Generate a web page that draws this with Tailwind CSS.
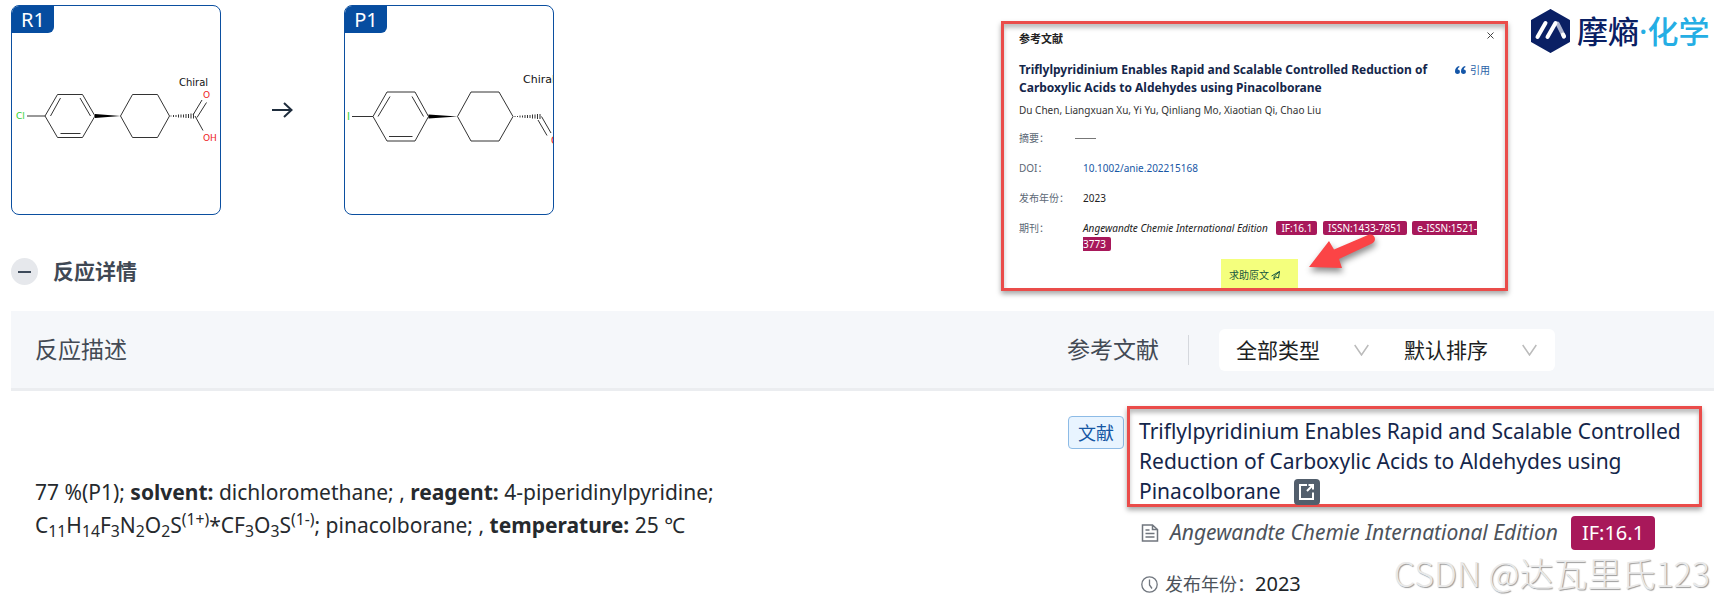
<!DOCTYPE html>
<html lang="zh">
<head>
<meta charset="utf-8">
<title>反应详情</title>
<script src="https://cdn.jsdelivr.net/npm/@tailwindcss/browser@4"></script>
</head>
<body class="relative bg-white overflow-x-hidden font-['Noto_Sans','Noto_Sans_CJK_SC',sans-serif] text-[#212529]">
<header class="flex items-start">
  <div class="grow pl-[11px] pt-[5px]">
    <div class="flex items-center">
      <figure class="relative size-[210px] shrink-0 overflow-hidden rounded-lg border border-[#0b4fa0]">
        <figcaption class="absolute left-0 top-0 flex h-[27px] w-[42px] items-center justify-center rounded-br-md bg-[#064da0] text-xl text-white">R1</figcaption>
        <svg class="size-full" viewBox="12 6 208 208" fill="none" stroke="#333" stroke-width="1" aria-label="R1">
          <path d="M27 116H45L57.500 94.500H82.500L95 116L82.500 137.500H57.500L45 116M50.500 116L60.500 98M80 98L90.500 116M60.500 133.500H80.500M120.500 116L132.500 94.500H157.500L169.500 116L157.500 137.500H132.500ZM193 115L202 100M197 117.500L206.500 102.500M195 116L203 130.500"/>
          <path d="M95 114V118L120.500 116Z" fill="#000" stroke="none"/>
          <path d="M171 115.500v1M173.500 115v2M176 115v2M178.500 114.500v3M181 114.500v3M183.500 114.500v3M186 114v4M188.500 114v4M191 113.500v5M193.500 113.500v5"/>
          <g stroke="none" class="font-['DejaVu_Sans']"><text x="16" y="119" font-size="9" fill="#2fd02f">Cl</text><text x="179" y="86" font-size="10" fill="#111">Chiral</text><text x="203" y="98" font-size="9" fill="#e22">O</text><text x="203" y="141" font-size="9" fill="#e22">OH</text></g>
        </svg>
      </figure>
      <svg class="mx-[51px] h-[16px] w-[21px]" viewBox="0 0 21 16" fill="none" stroke="#1f2d3d" stroke-width="2"><path d="M0 8H19M12 1L19.500 8L12 15"/></svg>
      <figure class="relative size-[210px] shrink-0 overflow-hidden rounded-lg border border-[#0b4fa0]">
        <figcaption class="absolute left-0 top-0 flex h-[27px] w-[42px] items-center justify-center rounded-br-md bg-[#064da0] text-xl text-white">P1</figcaption>
        <svg class="size-full" viewBox="345 6 208 208" fill="none" stroke="#333" stroke-width="1" aria-label="P1">
          <path d="M352 116.500H373L387 92H415L428.500 116.500L415 141H387L373 116.500M378 116.500L390 96.500M412 96.500L423.500 116.500M389 136.500H412.500M457.500 116.500L471 92H499L513 116.500L499 141H471ZM541.500 116.500L551 133M538 120L547 135.500"/>
          <path d="M428.500 114.500V118.500L457.500 116.500Z" fill="#000" stroke="none"/>
          <path d="M515 116v1M517.500 116v1M520 115.500v2M522.500 115.500v2M525 115v3M527.500 115v3M530 115v3M532.500 114.500v4M535 114.500v4M537.500 114v5M540 114v5"/>
          <g stroke="none" class="font-['DejaVu_Sans']"><text x="347" y="120" font-size="10" fill="#2fd02f">I</text><text x="523" y="83" font-size="11" fill="#111">Chiral</text><text x="551" y="144" font-size="10" fill="#e22">O</text></g>
        </svg>
      </figure>
    </div>
    <div class="mt-[43px] flex h-[27px] items-center gap-[15px]">
      <button type="button" aria-label="收起" class="flex size-[27px] items-center justify-center rounded-full bg-[#e6e8ec]"><span class="h-[2px] w-[13px] bg-[#3d4a5a]"></span></button>
      <h2 class="text-[21px] font-bold leading-none text-[#3f4854]">反应详情</h2>
    </div>
  </div>

  <section class="relative mt-[21px] h-[270px] w-[507px] shrink-0 border-3 border-[#ea4c4a] px-[15px] text-[10px] shadow-[0_3px_5px_rgba(0,0,0,0.35),inset_0_4px_4px_rgba(0,0,0,0.25)]">
    <div class="flex items-start justify-between pt-[7px]">
      <h3 class="text-[11px] font-bold leading-[16px] text-[#222]">参考文献</h3>
      <button type="button" aria-label="关闭" class="-mr-[5px] flex size-[8px] items-center"><svg class="size-[7px]" viewBox="0 0 7 7" stroke="#444" fill="none"><path d="M0.500 0.500L6.500 6.500M6.500 0.500L0.500 6.500"/></svg></button>
    </div>
    <div class="mt-[14px] flex items-start justify-between">
      <h4 class="w-[430px] text-[12px] font-bold leading-[18px] text-[#14264a]">Triflylpyridinium Enables Rapid and Scalable Controlled Reduction of Carboxylic Acids to Aldehydes using Pinacolborane</h4>
      <button type="button" class="flex h-[18px] items-center gap-1 whitespace-nowrap text-[#2a62a8]"><svg class="h-[8px] w-[11px]" viewBox="0 0 11 8" fill="#1456a8"><path d="M4 0C1.500 .8 0 2.800 0 5.500C0 7 .9 8 2.400 8C3.900 8 4.900 7 4.900 5.700C4.900 4.400 4 3.500 2.700 3.500C2.800 2.300 3.400 1.500 4.600.9ZM10 0C7.500 .8 6 2.800 6 5.500C6 7 6.900 8 8.400 8C9.900 8 10.900 7 10.900 5.700C10.900 4.400 10 3.500 8.700 3.500C8.800 2.300 9.400 1.500 10.600.9Z"/></svg>引用</button>
    </div>
    <p class="mt-[5px] leading-[16px] text-[#333]">Du Chen, Liangxuan Xu, Yi Yu, Qinliang Mo, Xiaotian Qi, Chao Liu</p>
    <dl class="mt-[12px] grid grid-cols-[64px_1fr] gap-y-[14px] leading-[16px] text-[#222]">
      <dt class="text-[#5b6775]">摘要：</dt><dd class="flex items-center"><span class="-ml-[8px] h-px w-[21px] bg-[#777]"></span></dd>
      <dt class="text-[#5b6775]">DOI：</dt><dd><a href="#" class="text-[#1757a5]">10.1002/anie.202215168</a></dd>
      <dt class="text-[#5b6775]">发布年份：</dt><dd>2023</dd>
      <dt class="text-[#5b6775]">期刊：</dt>
      <dd class="w-[410px]"><i>Angewandte Chemie International Edition</i> <span class="ml-[6px] rounded-xs bg-[#a8185a] px-[5px] text-white">IF:16.1</span> <span class="ml-[3px] rounded-xs bg-[#a8185a] px-[5px] text-white">ISSN:1433-7851</span> <span class="ml-[3px] rounded-xs bg-[#a8185a] px-[5px] text-white">e-ISSN:1521-3773</span></dd>
    </dl>
    <button type="button" class="absolute bottom-0 left-[217px] flex h-[29px] w-[77px] items-center gap-[2px] bg-[#f4ff7d] pl-[8px] pt-[4px] text-[#16563f]">求助原文 <svg class="size-[9px]" viewBox="0 0 9 9" fill="none" stroke="#16563f"><path d="M.5 5L8.500 .5L7.500 7L4.500 5.800L3 8.500V5.500L8.500 .5"/></svg></button>
    <svg class="absolute left-[302px] top-[207px] h-[48px] w-[76px] drop-shadow-[1px_4px_3px_rgba(0,0,0,0.45)]" viewBox="1306 231 76 48" fill="#fb4446"><path d="M1309 267L1329 241L1334 249.500L1368 235C1374 232.500 1378 240 1372 243.500L1339 259L1342 268Z"/></svg>
  </section>

  <div class="ml-[23px] mt-[9px] flex w-[183px] shrink-0 items-center gap-[7px]">
    <svg class="h-[44px] w-[39px] shrink-0" viewBox="0 0 39 44"><path d="M19.500 1L38 11.500V32.500L19.500 43L1 32.500V11.500Z" fill="#0a2064" stroke="#0a2064" stroke-linejoin="round" stroke-width="2"/><g stroke-width="4" stroke-linecap="round" fill="none"><path d="M26.500 14.500L33 27.500" stroke="#aab2cd"/><path d="M6.500 28L14.500 14M16.500 28L24.500 14" stroke="#fff"/><path d="M32 25.500L33 27.500" stroke="#fff"/></g></svg>
    <div class="whitespace-nowrap text-[31px] font-medium leading-[44px] text-[#0a2064]">摩熵<span class="text-[#25aee4]">·化学</span></div>
  </div>
</header>

<main class="ml-[11px] mt-[20px]">
  <div class="flex h-[80px] items-center border-b-3 border-[#ebedf0] bg-[#f5f7fa] pl-[24px] text-[23px] text-[#434a54]">
    <h3 class="grow">反应描述</h3>
    <div class="flex w-[647px] shrink-0 items-center">
      <h3>参考文献</h3>
      <span class="ml-[29px] h-[30px] w-px bg-[#d5d8dd]"></span>
      <div class="ml-[30px] flex h-[42px] w-[336px] rounded-md bg-white text-[21px] text-[#1d1f23]">
        <label class="relative flex w-1/2 items-center"><select aria-label="类型" class="w-full appearance-none pl-[17px] pt-[2px] outline-none"><option>全部类型</option></select><svg class="pointer-events-none absolute right-[18px] h-[12px] w-[15px]" viewBox="0 0 15 12" fill="none" stroke="#bbb" stroke-width="1.500"><path d="M.7 1L7.500 11L14.300 1"/></svg></label>
        <label class="relative flex w-1/2 items-center"><select aria-label="排序" class="w-full appearance-none pl-[17px] pt-[2px] outline-none"><option>默认排序</option></select><svg class="pointer-events-none absolute right-[18px] h-[12px] w-[15px]" viewBox="0 0 15 12" fill="none" stroke="#bbb" stroke-width="1.500"><path d="M.7 1L7.500 11L14.300 1"/></svg></label>
      </div>
    </div>
  </div>
  <div class="flex pl-[24px]">
    <p class="w-[710px] pt-[85px] text-[21px] leading-[33px] text-[#262a2e]">77 %(P1); <b class="font-bold">solvent:</b> dichloromethane; , <b class="font-bold">reagent:</b> 4-piperidinylpyridine; C<sub>11</sub>H<sub>14</sub>F<sub>3</sub>N<sub>2</sub>O<sub>2</sub>S<sup>(1+)</sup>*CF<sub>3</sub>O<sub>3</sub>S<sup>(1-)</sup>; pinacolborane; , <b class="font-bold">temperature:</b> 25 ℃</p>
    <article class="ml-auto flex w-[646px] shrink-0 items-start gap-[3px] pt-[15px] text-[21px]">
      <span class="mt-[10px] flex h-[33px] w-[56px] items-center justify-center rounded-sm border border-[#8dbbe6] bg-[#e8f4ff] text-lg text-[#1557a4]">文献</span>
      <div>
        <h4 class="h-[101px] w-[575px] border-3 border-[#ea4c4a] pl-[9px] pt-[7px] leading-[30px] text-[#14264a] shadow-[0_3px_5px_rgba(0,0,0,0.35),inset_0_4px_4px_rgba(0,0,0,0.25)]"><a href="#">Triflylpyridinium Enables Rapid and Scalable Controlled Reduction of Carboxylic Acids to Aldehydes using Pinacolborane</a> <button type="button" aria-label="打开" class="ml-[8px] inline-flex size-[26px] items-center justify-center rounded-sm bg-[#525e6c] align-text-bottom"><svg class="size-[18px]" viewBox="0 0 18 18" fill="none" stroke="#fff" stroke-width="2"><path d="M9 2H2V16H15V9.500M10.500 2H15V6.500M15.500 1.500L9 8"/></svg></button></h4>
        <div class="mt-[9px] flex h-[34px] items-center pl-[14px] text-[#4d535b]">
          <svg class="h-[18px] w-[18px]" viewBox="0 0 18 18" fill="none" stroke="#70767e" stroke-width="1.500"><path d="M1.500 1H11.500L16.500 5.500V17H1.500ZM11.500 1V5.500H16.500M4.500 6H8.500M4.500 9.500H13.500M4.500 13H13.500"/></svg>
          <i class="ml-[11px] mr-[13px]">Angewandte Chemie International Edition</i>
          <span class="flex h-[34px] w-[84px] items-center justify-center rounded-sm bg-[#a8185a] text-xl text-white">IF:16.1</span>
        </div>
        <div class="mt-[18px] flex h-[32px] items-center pl-[14px]">
          <svg class="size-[17px]" viewBox="0 0 17 17" fill="none" stroke="#70767e" stroke-width="1.300"><circle cx="8.500" cy="8.500" r="7.700"/><path d="M8.500 3.500V9L11 12.500"/></svg>
          <span class="ml-[7px] text-lg text-[#4d535b]">发布年份：</span><span class="text-xl">2023</span>
        </div>
      </div>
    </article>
  </div>
</main>
<div class="pointer-events-none absolute right-1 top-[551px] whitespace-nowrap font-['Noto_Sans_CJK_SC'] text-[34px] font-light leading-[44px] text-[#e9e9e9] [text-shadow:1px_1px_1px_#999]">CSDN @达瓦里氏123</div>
</body>
</html>
